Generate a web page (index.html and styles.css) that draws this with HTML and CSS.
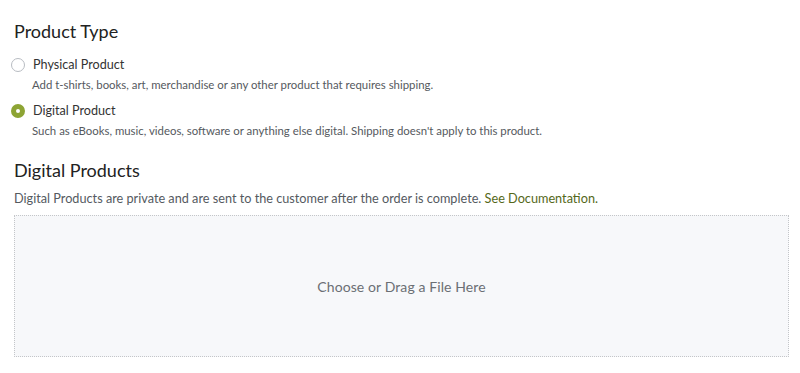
FILE: index.html
```html
<!DOCTYPE html>
<html>
<head>
<meta charset="utf-8">
<link rel="stylesheet" href="styles.css">
</head>
<body>
<div class="page">
  <h2 class="heading">Product Type</h2>
  <div class="options">
    <div class="option">
      <div class="option-row">
        <span class="radio"></span>
        <span class="label">Physical Product</span>
      </div>
      <div class="desc">Add t-shirts, books, art, merchandise or any other product that requires shipping.</div>
    </div>
    <div class="option">
      <div class="option-row">
        <span class="radio checked"></span>
        <span class="label">Digital Product</span>
      </div>
      <div class="desc">Such as eBooks, music, videos, software or anything else digital. Shipping doesn't apply to this product.</div>
    </div>
  </div>
  <h2 class="heading second">Digital Products</h2>
  <p class="intro">Digital Products are private and are sent to the customer after the order is complete. <a class="link" href="#">See Documentation.</a></p>
  <div class="dropzone">Choose or Drag a File Here</div>
</div>
</body>
</html>
```
FILE: styles.css
```css
html, body {
  margin: 0;
  padding: 0;
  background: #ffffff;
}
body {
  font-family: "Lato", "Open Sans", sans-serif;
  color: #333;
}
.page {
  padding: 20px 11px 0 14px;
}
.heading {
  margin: 0;
  font-size: 18px;
  font-weight: 400;
  color: #222;
  line-height: 22px;
}
.options {
  margin-top: 13px;
  display: flex;
  flex-direction: column;
  gap: 6px;
}
.option-row {
  display: flex;
  align-items: center;
  gap: 8px;
  margin-left: -3px;
}
.radio {
  width: 14px;
  height: 14px;
  box-sizing: border-box;
  border-radius: 50%;
  border: 1px solid #b8bcc2;
  background: #fff;
  flex: none;
}
.radio.checked {
  border: 5px solid #8da434;
}
.label {
  font-size: 12.6px;
  color: #333;
  line-height: 20px;
}
.desc {
  margin-left: 18px;
  margin-top: 0;
  font-size: 11.4px;
  color: #55595e;
  line-height: 20px;
}
.second {
  margin-top: 18px;
}
.intro {
  margin: 7px 0 0;
  font-size: 12.7px;
  color: #555a5f;
  line-height: 20px;
}
.link {
  color: #55681a;
  text-decoration: none;
}
.dropzone {
  margin-top: 7px;
  height: 140px;
  border: 1px dotted #c4c6c9;
  background: #f7f8fa;
  display: flex;
  align-items: center;
  justify-content: center;
  font-size: 14px;
  color: #6b6f74;
  letter-spacing: 0.1px;
}
```
